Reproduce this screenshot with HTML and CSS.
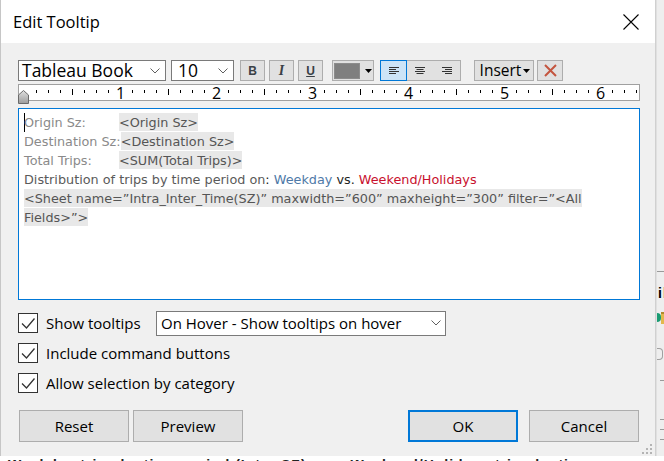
FILE: index.html
```html
<!DOCTYPE html>
<html>
<head>
<meta charset="utf-8">
<title>Edit Tooltip</title>
<link rel="stylesheet" href="styles.css">
</head>
<body>
<div class="screen">
  <div class="dialog">
    <div class="titlebar">
      <span class="title">Edit Tooltip</span>
      <svg class="close" width="16" height="16" viewBox="0 0 16 16"><path d="M0.5 0.5L15.5 15.5M15.5 0.5L0.5 15.5" stroke="#000" stroke-width="1.1" fill="none"/></svg>
    </div>
    <div class="content">
      <div class="toolbar">
        <div class="select font-select">
          <span class="select-text">Tableau Book</span>
          <svg class="chev" width="10" height="6" viewBox="0 0 10 6"><path d="M0.5 0.5L5 5L9.5 0.5" stroke="#606060" fill="none"/></svg>
        </div>
        <div class="select size-select">
          <span class="select-text">10</span>
          <svg class="chev" width="10" height="6" viewBox="0 0 10 6"><path d="M0.5 0.5L5 5L9.5 0.5" stroke="#606060" fill="none"/></svg>
        </div>
        <div class="tbtn fmt bold-btn">B</div>
        <div class="tbtn fmt italic-btn">I</div>
        <div class="tbtn fmt under-btn">U</div>
        <div class="tbtn color-btn">
          <span class="swatch"></span>
          <svg width="7" height="4" viewBox="0 0 7 4"><path d="M0 0H7L3.5 4Z" fill="#000"/></svg>
        </div>
        <div class="align-group">
          <span class="seg active">
            <svg width="10" height="7" viewBox="0 0 10 7"><path d="M0 0.5H10M0 2.5H7M0 4.5H10M0 6.5H7" stroke="#333" fill="none"/></svg>
          </span>
          <span class="seg">
            <svg width="10" height="7" viewBox="0 0 10 7"><path d="M0 0.5H10M1.5 2.5H8.5M0 4.5H10M1.5 6.5H8.5" stroke="#333" fill="none"/></svg>
          </span>
          <span class="seg">
            <svg width="10" height="7" viewBox="0 0 10 7"><path d="M0 0.5H10M3 2.5H10M0 4.5H10M3 6.5H10" stroke="#333" fill="none"/></svg>
          </span>
        </div>
        <div class="tbtn insert-btn">
          <span>Insert</span>
          <svg width="7" height="4" viewBox="0 0 7 4"><path d="M0 0H7L3.5 4Z" fill="#000"/></svg>
        </div>
        <div class="tbtn clear-btn">
          <svg width="13" height="13" viewBox="0 0 13 13"><path d="M1 1L12 12M12 1L1 12" stroke="#c4553f" stroke-width="2" fill="none"/></svg>
        </div>
      </div>

      <div class="ruler">
        <svg class="ruler-svg" width="620" height="15" viewBox="0 0 620 15">
          <path d="M17.5 5v3M29.5 5v3M41.5 5v3M65.5 5v3M77.5 5v3M89.5 5v3M113.5 5v3M125.5 5v3M137.5 5v3M161.5 5v3M173.5 5v3M185.5 5v3M209.5 5v3M221.5 5v3M233.5 5v3M257.5 5v3M269.5 5v3M281.5 5v3M305.5 5v3M317.5 5v3M329.5 5v3M353.5 5v3M365.5 5v3M377.5 5v3M401.5 5v3M413.5 5v3M425.5 5v3M449.5 5v3M461.5 5v3M473.5 5v3M497.5 5v3M509.5 5v3M521.5 5v3M545.5 5v3M557.5 5v3M569.5 5v3M593.5 5v3M605.5 5v3M617.5 5v3" stroke="#000" fill="none"/>
          <path d="M53.5 4v6M149.5 4v6M245.5 4v6M341.5 4v6M437.5 4v6M533.5 4v6" stroke="#000" fill="none"/>
          <g class="ruler-num">
            <text x="101.5" y="14" text-anchor="middle">1</text>
            <text x="197.5" y="14" text-anchor="middle">2</text>
            <text x="293.5" y="14" text-anchor="middle">3</text>
            <text x="389.5" y="14" text-anchor="middle">4</text>
            <text x="485.5" y="14" text-anchor="middle">5</text>
            <text x="581.5" y="14" text-anchor="middle">6</text>
          </g>
        </svg>
        <svg class="indent-marker" width="11" height="14" viewBox="0 0 11 14">
          <defs>
            <linearGradient id="mk" x1="0" y1="0" x2="0" y2="1">
              <stop offset="0" stop-color="#e0e0e0"/>
              <stop offset="1" stop-color="#9c9c9c"/>
            </linearGradient>
          </defs>
          <path d="M5.5 0.5L10.5 5V13.5H0.5V5Z" fill="url(#mk)" stroke="#6a6a6a"/>
        </svg>
      </div>

      <div class="editor">
        <div class="line"><span class="caret"></span><span class="lbl">Origin Sz:</span><span class="fld">&lt;Origin Sz&gt;</span></div>
        <div class="line"><span class="lbl">Destination Sz:</span><span class="fld">&lt;Destination Sz&gt;</span></div>
        <div class="line"><span class="lbl">Total Trips:</span><span class="fld">&lt;SUM(Total Trips)&gt;</span></div>
        <div class="line"><span class="txt">Distribution of trips by time period on</span><span class="dark">: </span><span class="blue">Weekday</span><span class="dark"> vs. </span><span class="red">Weekend/Holidays</span></div>
        <div class="line"><span class="fld">&lt;Sheet name=”Intra_Inter_Time(SZ)” maxwidth=”600” maxheight=”300” filter=”&lt;All Fields&gt;”&gt;</span></div>
      </div>

      <div class="options">
        <div class="opt-row">
          <span class="checkbox"><svg width="18" height="18" viewBox="0 0 18 18"><path d="M3 9.5L7.5 14L15.5 4.5" stroke="#333" stroke-width="1.3" fill="none"/></svg></span>
          <span class="opt-label first">Show tooltips</span>
          <div class="mode-select">
            <span>On Hover - Show tooltips on hover</span>
            <svg width="10" height="6" viewBox="0 0 10 6"><path d="M0.5 0.5L5 5L9.5 0.5" stroke="#606060" fill="none"/></svg>
          </div>
        </div>
        <div class="opt-row">
          <span class="checkbox"><svg width="18" height="18" viewBox="0 0 18 18"><path d="M3 9.5L7.5 14L15.5 4.5" stroke="#333" stroke-width="1.3" fill="none"/></svg></span>
          <span class="opt-label">Include command buttons</span>
        </div>
        <div class="opt-row">
          <span class="checkbox"><svg width="18" height="18" viewBox="0 0 18 18"><path d="M3 9.5L7.5 14L15.5 4.5" stroke="#333" stroke-width="1.3" fill="none"/></svg></span>
          <span class="opt-label">Allow selection by category</span>
        </div>
      </div>

      <div class="buttons">
        <button class="btn reset">Reset</button>
        <button class="btn preview">Preview</button>
        <button class="btn ok">OK</button>
        <button class="btn cancel">Cancel</button>
      </div>
    </div>
    <svg class="grip" width="11" height="11" viewBox="0 0 11 11">
      <rect x="8" y="0" width="2" height="2" fill="#b4b4b4"/>
      <rect x="4" y="4" width="2" height="2" fill="#b4b4b4"/>
      <rect x="8" y="4" width="2" height="2" fill="#b4b4b4"/>
      <rect x="0" y="8" width="2" height="2" fill="#b4b4b4"/>
      <rect x="4" y="8" width="2" height="2" fill="#b4b4b4"/>
      <rect x="8" y="8" width="2" height="2" fill="#b4b4b4"/>
    </svg>
  </div>

  <div class="side">
    <div class="side-line l1"></div>
    <div class="side-text">il</div>
    <div class="side-icon"><span class="dot"></span><span class="folder"></span></div>
    <div class="side-box"></div>
    <div class="side-line l2"></div>
    <div class="side-line l3"></div>
    <div class="side-line l4"></div>
    <div class="side-line l5"></div>
  </div>

  <div class="bottom">
    <span class="bottom-text">Weekday trips by time period (Intra SZ)&nbsp;&nbsp;&nbsp;&nbsp;&nbsp;&nbsp;&nbsp;&nbsp;&nbsp;Weekend/Holidays trips by time</span>
  </div>
</div>
</body>
</html>
```

FILE: styles.css
```css
* { box-sizing: border-box; }
html, body { margin: 0; padding: 0; }
body {
  width: 664px;
  height: 461px;
  overflow: hidden;
  background: #ffffff;
  font-family: "Open Sans", "Noto Sans", sans-serif;
  color: #000;
}
.screen {
  display: grid;
  grid-template-columns: 656px 8px;
  grid-template-rows: 456px 5px;
  width: 664px;
  height: 461px;
}

/* dialog */
.dialog {
  position: relative;
  background: #f0f0f0;
  border-left: 1px solid #c6c6c6;
  border-right: 1px solid #d0d0d0;
  display: flex;
  flex-direction: column;
}
.titlebar {
  height: 43px;
  flex: 0 0 43px;
  background: #fff;
  display: flex;
  align-items: center;
  justify-content: space-between;
  padding: 0 16px 0 12px;
}
.title { font-size: 16.5px; line-height: 20px; margin-top: 1px; }
.close { display: block; }

.content {
  padding: 17px 15px 0 17px;
  display: flex;
  flex-direction: column;
}

/* toolbar */
.toolbar { display: flex; height: 21px; }
.select {
  background: #fff;
  border: 1px solid #7a7a7a;
  display: flex;
  align-items: center;
  justify-content: space-between;
  padding: 0 5px 0 3px;
}
.select-text { font-size: 17.5px; line-height: 19px; }
.font-select { width: 148px; }
.size-select { width: 63px; margin-left: 5px; padding-left: 6px; }
.chev { display: block; }
.tbtn {
  background: #e1e1e1;
  border: 1px solid #adadad;
  display: flex;
  align-items: center;
  justify-content: center;
}
.fmt {
  width: 25px;
  color: #3a4046;
  font-family: "Liberation Sans", sans-serif;
  font-weight: bold;
  font-size: 12px;
}
.bold-btn { margin-left: 6px; }
.italic-btn { margin-left: 4px; font-family: "Liberation Serif", serif; font-style: italic; font-size: 14px; }
.under-btn { margin-left: 4px; text-decoration: underline; }
.color-btn {
  width: 42px;
  margin-left: 9px;
  justify-content: flex-start;
  padding-left: 1px;
  gap: 5px;
}
.swatch { width: 26px; height: 16px; background: #7f7f7f; border: 1px solid #8c8c8c; }
.align-group {
  margin-left: 6px;
  width: 81px;
  display: flex;
  border: 1px solid #adadad;
  background: #e1e1e1;
}
.seg { flex: 1; display: flex; align-items: center; justify-content: center; }
.seg.active { background: #cce4f7; outline: 1px solid #0078d7; outline-offset: -1px; margin: -1px 0 -1px -1px; flex: 0 0 27px; }
.insert-btn { margin-left: 13px; width: 60px; gap: 2px; padding-left: 2px; }
.insert-btn span { font-size: 15.5px; line-height: 19px; }
.clear-btn { margin-left: 3px; width: 26px; }

/* ruler */
.ruler {
  position: relative;
  margin-top: 3px;
  height: 17px;
  background: #fff;
  border: 1px solid #a0a0a0;
}
.ruler-svg { display: block; overflow: visible; }
.ruler-num { font-family: "Open Sans", sans-serif; font-size: 16px; fill: #000; }
.indent-marker { position: absolute; left: -1px; top: 5px; }

/* editor */
.editor {
  margin-top: 7px;
  height: 192px;
  background: #fff;
  border: 1px solid #0078d7;
  padding: 4px 5px;
  font-family: "DejaVu Sans", "Open Sans", sans-serif;
  font-size: 12.8px;
  color: #555;
}
.line { line-height: 19px; white-space: normal; }
.caret { display: inline-block; width: 0; height: 19px; border-left: 1px solid #000; vertical-align: top; margin-right: -1px; }
.lbl { display: inline-block; min-width: 95px; color: #8a8a8a; }
.fld { background: #e8e8e8; color: #555; padding: 2px 0 1px; }
.txt { color: #5a5a5a; }
.dark { color: #222; }
.blue { color: #4e79a7; }
.red { color: #c8102e; }

/* options */
.options { margin-top: 8px; display: flex; flex-direction: column; }
.opt-row { height: 30px; display: flex; align-items: center; }
.checkbox {
  width: 20px; height: 20px;
  background: #fff;
  border: 1px solid #333;
  display: flex; align-items: center; justify-content: center;
  margin-top: -1px;
}
.opt-label { margin-left: 8px; font-size: 15px; line-height: 20px; }
.opt-label.first { flex: 0 0 110px; }
.mode-select {
  width: 290px;
  height: 25px;
  background: #fff;
  border: 1px solid #7a7a7a;
  display: flex;
  align-items: center;
  justify-content: space-between;
  padding: 0 4px 0 4px;
  font-size: 15px;
}

/* buttons */
.buttons { margin-top: 12px; display: flex; height: 32px; }
.btn {
  width: 110px;
  height: 32px;
  background: #e1e1e1;
  border: 1px solid #adadad;
  font-family: "Open Sans", sans-serif;
  font-size: 15px;
  color: #000;
  padding: 0;
}
.reset { margin-left: 1px; }
.preview { margin-left: 4px; }
.ok { margin-left: auto; border: 2px solid #0078d7; }
.cancel { margin-left: 11px; margin-right: 1px; }

.grip { position: absolute; right: 2px; bottom: 1px; }

/* background app at right */
.side {
  background: #eeeeee;
  border-left: 1px solid #e0e0e0;
  display: flex;
  flex-direction: column;
  overflow: hidden;
}
.side-line { height: 1px; background: #9a9a9a; margin-left: 3px; }
.side-line.l1 { margin-top: 271px; margin-left: 0; }
.side-text { margin-top: 13px; font-family: "Liberation Sans", sans-serif; font-weight: bold; font-size: 14px; line-height: 16px; padding-left: 1px; letter-spacing: 1px; }
.side-icon { margin-top: 8px; height: 17px; display: flex; align-items: center; }
.side-icon .dot { width: 4px; height: 9px; background: #1a9c73; border-radius: 0 5px 5px 0; }
.side-icon .folder { width: 4px; height: 12px; background: #e2b84d; border-top: 2px solid #b08a2c; }
.side-box { margin-top: 22px; height: 12px; width: 6px; border: 1px solid #a0a0a0; border-left: none; border-radius: 0 4px 4px 0; }
.side-line.l2 { margin-top: 20px; }
.side-line.l3 { margin-top: 38px; }
.side-line.l4 { margin-top: 9px; }
.side-line.l5 { margin-top: 9px; }

/* bottom strip of background app */
.bottom {
  grid-column: 1 / 3;
  background: #fff;
  overflow: hidden;
  padding-left: 8px;
  padding-top: 2px;
}
.bottom-text {
  display: block;
  font-family: "Liberation Sans", sans-serif;
  font-weight: bold;
  font-size: 14px;
  line-height: 14px;
  color: #222;
  white-space: nowrap;
  letter-spacing: 1px;
}
```
